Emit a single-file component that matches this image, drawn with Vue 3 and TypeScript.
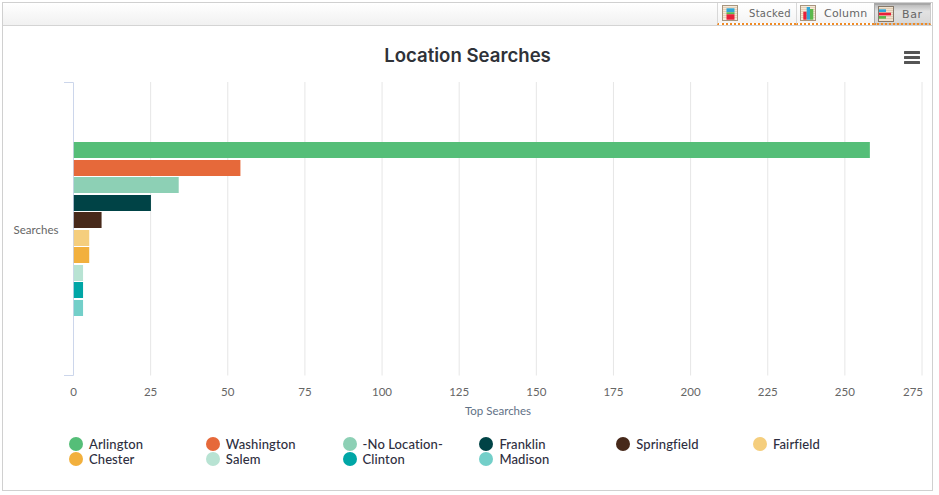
<script setup lang="ts">
const scale = 3.0855
const x0 = 73.5
const series = [
  { name: 'Arlington', value: 258, color: '#55be78' },
  { name: 'Washington', value: 54, color: '#e6693a' },
  { name: '-No Location-', value: 34, color: '#8dd0b5' },
  { name: 'Franklin', value: 25, color: '#004346' },
  { name: 'Springfield', value: 9, color: '#47291a' },
  { name: 'Fairfield', value: 5, color: '#f5ce7d' },
  { name: 'Chester', value: 5, color: '#f2b03d' },
  { name: 'Salem', value: 3, color: '#b8e3d3' },
  { name: 'Clinton', value: 3, color: '#00a6a6' },
  { name: 'Madison', value: 3, color: '#73cfc9' },
]
const barTops = [142, 160, 177, 195, 212, 230, 247, 265, 282, 300]
const ticks = Array.from({ length: 12 }, (_, i) => i * 25)
const tickX = (t: number) => x0 + t * scale
const labelX = (t: number) => (t === 275 ? 913 : tickX(t))
const stripes = [2.5, 4.5, 6.5, 8.5, 10.5, 12.5]
</script>

<template>
  <div class="card">
    <div class="tabs">
      <div class="spacer"></div>
      <div class="tab">
        <svg class="icon" viewBox="0 0 16 16">
          <rect x=".5" y=".5" width="15" height="15" fill="#f6ead9" stroke="#a8957e" />
          <path v-for="y in stripes" :key="y" :d="`M1 ${y}h14`" stroke="#e6d2ba" />
          <rect x="4.5" y="3.3" width="8" height="4" fill="#2fa6d8" />
          <rect x="4.5" y="7.3" width="8" height="2" fill="#5cb84c" />
          <rect x="4.5" y="9.3" width="8" height="5.4" fill="#e8203a" />
        </svg>
        <span class="lbl stacked">Stacked</span>
      </div>
      <div class="tab col">
        <svg class="icon" viewBox="0 0 16 16">
          <rect x=".5" y=".5" width="15" height="15" fill="#f6ead9" stroke="#a8957e" />
          <path v-for="y in stripes" :key="y" :d="`M1 ${y}h14`" stroke="#e6d2ba" />
          <rect x="3.3" y="6.7" width="3.4" height="8" fill="#e8203a" />
          <rect x="6.7" y="2" width="3.3" height="12.7" fill="#2fa6d8" />
          <rect x="10" y="4" width="3.3" height="10.7" fill="#5cb84c" />
        </svg>
        <span class="lbl column">Column</span>
      </div>
      <div class="tab active">
        <svg class="icon" viewBox="0 0 16 16">
          <rect x=".5" y=".5" width="15" height="15" fill="#f0e2cf" stroke="#85786a" />
          <path v-for="y in stripes" :key="y" :d="`M1 ${y}h14`" stroke="#dfcbb2" />
          <rect x="1" y="3.3" width="7" height="2.7" fill="#2fa6d8" />
          <rect x="1" y="6.7" width="12" height="2.7" fill="#e8203a" />
          <rect x="1" y="10" width="7" height="2.7" fill="#5cb84c" />
        </svg>
        <span class="lbl bar">Bar</span>
      </div>
      <div class="tail"></div>
    </div>

    <div class="body">
      <h1 class="title">Location Searches</h1>
      <svg class="menu" viewBox="0 0 16 13" aria-label="menu">
        <path d="M1 1.5h14M1 6.5h14M1 11.5h14" stroke="#555" stroke-width="3" stroke-linecap="round" />
      </svg>

      <svg class="plot" viewBox="3 70 928 350">
        <line
          v-for="t in ticks.slice(1)"
          :key="t"
          :x1="tickX(t)"
          :x2="tickX(t)"
          y1="82"
          y2="375.5"
          stroke="#e6e6e6"
        />
        <path d="M64 82.5H73.5V375.5H64" fill="none" stroke="#ccd6eb" />
        <rect
          v-for="(s, i) in series"
          :key="s.name"
          :x="x0 + 0.3"
          :y="barTops[i]"
          :width="s.value * scale"
          height="16"
          :fill="s.color"
        />
        <text x="36" y="234" class="axis" text-anchor="middle">Searches</text>
        <text
          v-for="t in ticks"
          :key="'l' + t"
          :x="labelX(t)"
          y="396"
          class="axis"
          text-anchor="middle"
        >{{ t }}</text>
        <text x="498" y="415" class="axis xtitle" text-anchor="middle">Top Searches</text>
      </svg>

      <ul class="legend">
        <li v-for="s in series" :key="s.name" class="item">
          <span class="dot" :style="{ background: s.color }"></span>
          <span class="name">{{ s.name }}</span>
        </li>
      </ul>
    </div>
  </div>
</template>

<style>
html, body { margin: 0; background: #fff; }
</style>

<style scoped>
.card {
  box-sizing: border-box;
  width: 931px;
  height: 489px;
  margin: 2px 0 0 2px;
  border: 1px solid #d0d0d0;
  background: #fff;
  font-family: Lato, "Noto Sans", sans-serif;
}
.tabs {
  box-sizing: border-box;
  display: flex;
  height: 23px;
  border-bottom: 1px solid #d4d4d4;
}
.spacer {
  flex: 1;
  background: linear-gradient(180deg, #fff 0, #f1f1f1 100%);
}
.tail { width: 1px; background: #fff; }
.tab {
  box-sizing: border-box;
  display: flex;
  align-items: center;
  height: 22px;
  width: 79px;
  padding-left: 4px;
  background: linear-gradient(180deg, #fff 0, #f4f4f4 100%);
  border-left: 1px solid #d8d8d8;
  border-bottom: 2px dotted #f08a24;
  font: 11px "DejaVu Sans", sans-serif;
  color: #666;
}
.tab.col { width: 78px; padding-left: 3px; }
.tab.active {
  width: 57px;
  padding-left: 3px;
  background: linear-gradient(180deg, #bdbdbd 0, #e2e2e2 35%, #d8d8d8 100%);
  border-top: 2px solid #a8a8a8;
  border-left: 1px solid #aaa;
  border-right: 1px solid #ccc;
}
.icon { width: 16px; height: 16px; flex: none; }
.lbl { white-space: nowrap; }
.stacked { margin-left: 11px; font-size: 10px; letter-spacing: .3px; }
.column { margin-left: 8px; letter-spacing: .2px; }
.bar { margin-left: 8px; letter-spacing: .6px; }

.body { position: relative; }
.title {
  margin: 0;
  padding-top: 18px;
  height: 26px;
  line-height: 22px;
  text-align: center;
  font-size: 18.6px;
  font-weight: 600;
  color: #2f3238;
  font-family: Inter, sans-serif;
}
.menu {
  position: absolute;
  right: 12px;
  top: 25px;
  width: 16px;
  height: 13px;
}
.plot {
  display: block;
  width: 928px;
  height: 350px;
}
.axis {
  font-family: Lato, sans-serif;
  font-size: 11.5px;
  fill: #666;
}
.xtitle { fill: #5f7186; }
.legend {
  list-style: none;
  margin: 16px 0 0;
  padding: 0 0 0 66px;
  display: grid;
  grid-template-columns: repeat(6, 136.8px);
  grid-auto-rows: 15px;
}
.item { display: flex; align-items: center; gap: 6px; }
.dot { width: 14px; height: 14px; border-radius: 50%; flex: none; }
.name {
  font-size: 13px;
  font-weight: 500;
  color: #2e2e40;
  letter-spacing: .1px;
  white-space: nowrap;
}
</style>
